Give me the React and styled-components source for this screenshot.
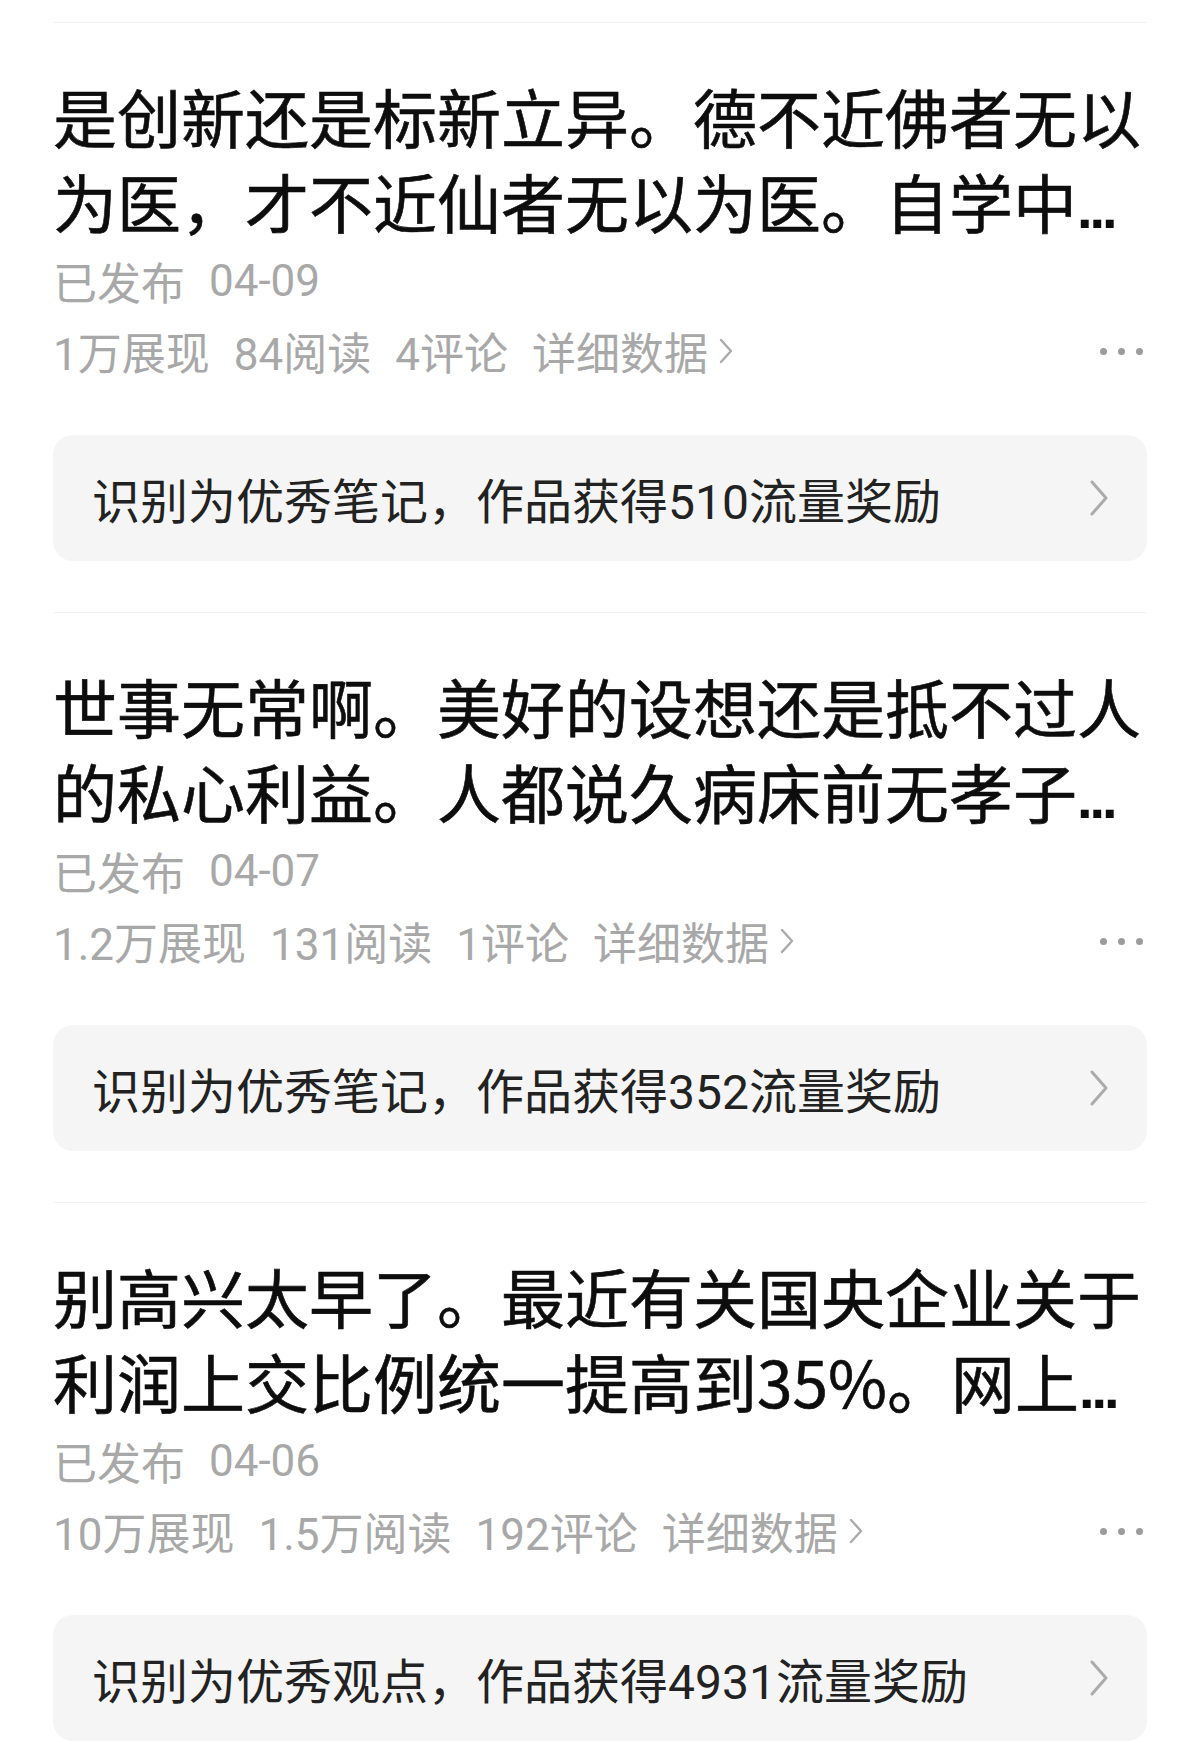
import React from "react";
import styled, { createGlobalStyle } from "styled-components";

const GlobalStyle = createGlobalStyle`
  body {
    margin: 0;
    background: #ffffff;
    font-family: "Roboto", "Noto Sans CJK SC", "Noto Sans", sans-serif;
  }
`;

const posts = [
  {
    title: "是创新还是标新立异。德不近佛者无以为医，才不近仙者无以为医。自学中",
    date: "04-09",
    stats: ["1万展现", "84阅读", "4评论"],
    reward: "识别为优秀笔记，作品获得510流量奖励",
  },
  {
    title: "世事无常啊。美好的设想还是抵不过人的私心利益。人都说久病床前无孝子",
    date: "04-07",
    stats: ["1.2万展现", "131阅读", "1评论"],
    reward: "识别为优秀笔记，作品获得352流量奖励",
  },
  {
    title: "别高兴太早了。最近有关国央企业关于利润上交比例统一提高到35%。网上",
    date: "04-06",
    stats: ["10万展现", "1.5万阅读", "192评论"],
    reward: "识别为优秀观点，作品获得4931流量奖励",
  },
];

const SmallChevron = () => (
  <svg width="16" height="30" viewBox="0 0 16 30">
    <polyline
      points="3,4 13,15 3,26"
      fill="none"
      stroke="#aaaaaa"
      strokeWidth="2.4"
      strokeLinecap="round"
      strokeLinejoin="round"
    />
  </svg>
);

const BigChevron = () => (
  <svg width="20" height="38" viewBox="0 0 20 38">
    <polyline
      points="3,3 17,19 3,35"
      fill="none"
      stroke="#ababab"
      strokeWidth="3"
      strokeLinecap="round"
      strokeLinejoin="round"
    />
  </svg>
);

const App = () => {
  return (
    <>
      <GlobalStyle />
      <Page>
        {posts.map((post) => (
          <Post key={post.date}>
            <Title>
              {post.title}
              <Ellipsis>...</Ellipsis>
            </Title>
            <MetaRow $top={3}>
              <span>已发布</span>
              <span>{post.date}</span>
            </MetaRow>
            <MetaRow>
              {post.stats.map((s) => (
                <span key={s}>{s}</span>
              ))}
              <DetailLink>
                详细数据
                <SmallChevron />
              </DetailLink>
              <More>
                <i />
                <i />
                <i />
              </More>
            </MetaRow>
            <RewardCard>
              <span>{post.reward}</span>
              <BigChevron />
            </RewardCard>
          </Post>
        ))}
      </Page>
    </>
  );
};

const Page = styled.main`
  padding: 22px 53px 0;
`;

const Post = styled.section`
  border-top: 1px solid #f1f1f1;
  padding: 50px 0 51px;
`;

const Title = styled.h2`
  margin: 0;
  font-family: "Noto Sans CJK SC", sans-serif;
  font-size: 64px;
  font-weight: 400;
  line-height: 85px;
  color: #0d0d0d;
  -webkit-text-stroke: 0.6px #0d0d0d;
`;

const Ellipsis = styled.span`
  font-family: "Liberation Sans", sans-serif;
  font-weight: 700;
  font-size: 56px;
  line-height: 0;
  letter-spacing: -3px;
  -webkit-text-stroke: 0;
`;

const MetaRow = styled.div`
  display: flex;
  align-items: center;
  gap: 24px;
  margin-top: ${(p) => p.$top || 0}px;
  height: 70px;
  font-size: 44px;
  color: #a8a8a8;
`;

const DetailLink = styled.span`
  display: flex;
  align-items: center;
  gap: 10px;
`;

const More = styled.span`
  margin-left: auto;
  margin-right: 4px;
  display: flex;
  gap: 11px;

  i {
    display: block;
    width: 7px;
    height: 7px;
    border-radius: 50%;
    background: #9c9c9c;
  }
`;

const RewardCard = styled.div`
  margin-top: 49px;
  height: 126px;
  border-radius: 20px;
  background: #f5f5f5;
  display: flex;
  align-items: center;
  justify-content: space-between;
  padding: 0 38px 0 39px;
  font-size: 48px;
  color: #222222;
`;

export default App;
